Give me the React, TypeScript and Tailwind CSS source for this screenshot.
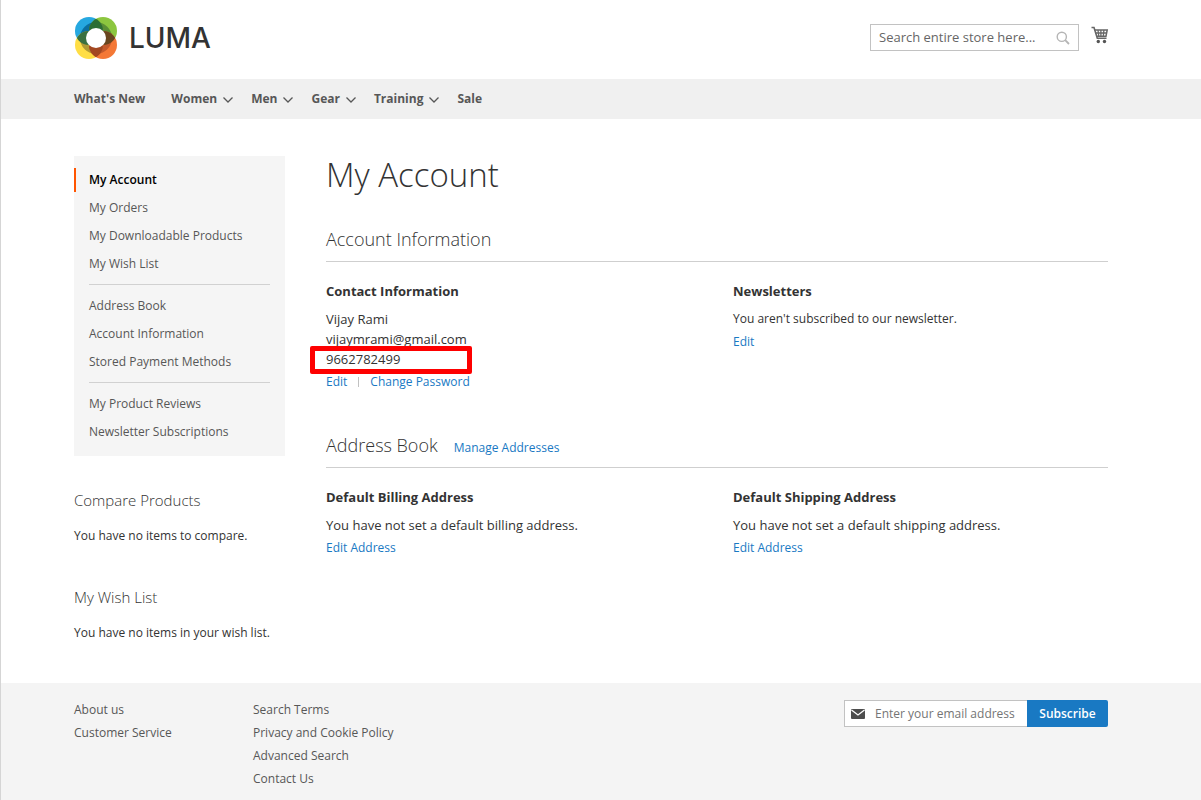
import React from 'react';

const navItems = [
  { label: "What's New", menu: false },
  { label: 'Women', menu: true },
  { label: 'Men', menu: true },
  { label: 'Gear', menu: true },
  { label: 'Training', menu: true },
  { label: 'Sale', menu: false },
];

const accountLinks = [
  ['My Account', 'My Orders', 'My Downloadable Products', 'My Wish List'],
  ['Address Book', 'Account Information', 'Stored Payment Methods'],
  ['My Product Reviews', 'Newsletter Subscriptions'],
];

const footerLinks = [
  ['About us', 'Customer Service'],
  ['Search Terms', 'Privacy and Cookie Policy', 'Advanced Search', 'Contact Us'],
];

function Logo() {
  return (
    <a href="#" className="flex items-center gap-3" aria-label="Luma home">
      <svg width="43" height="42" viewBox="-1 0 43 42" aria-hidden="true">
        <defs>
          <clipPath id="tl"><circle cx="14" cy="14" r="14" /></clipPath>
          <clipPath id="tr"><circle cx="28" cy="14" r="14" /></clipPath>
          <clipPath id="bl"><circle cx="14" cy="28" r="14" /></clipPath>
          <clipPath id="br"><circle cx="28" cy="28" r="14" /></clipPath>
        </defs>
        <circle cx="14" cy="14" r="14" fill="#26a8e0" />
        <circle cx="28" cy="14" r="14" fill="#8cc63f" />
        <circle cx="14" cy="28" r="14" fill="#ffde45" />
        <circle cx="28" cy="28" r="14" fill="#f47836" />
        <circle cx="21" cy="21" r="16" fill="#0b6f9f" clipPath="url(#tl)" />
        <circle cx="21" cy="21" r="16" fill="#5a8f35" clipPath="url(#tr)" />
        <circle cx="21" cy="21" r="16" fill="#b09a35" clipPath="url(#bl)" />
        <circle cx="21" cy="21" r="16" fill="#c45a2c" clipPath="url(#br)" />
        <g clipPath="url(#tl)">
          <circle cx="28" cy="14" r="14" fill="#2c6e35" />
          <circle cx="14" cy="28" r="14" fill="#3a7040" />
        </g>
        <g clipPath="url(#br)">
          <circle cx="28" cy="14" r="14" fill="#69461f" />
          <circle cx="14" cy="28" r="14" fill="#a34822" />
        </g>
        <circle cx="21" cy="21" r="10" fill="#fff" />
      </svg>
      <span className="font-['Inter',sans-serif] text-[28px] leading-8 font-medium text-[#333]">LUMA</span>
    </a>
  );
}

function CartIcon() {
  return (
    <svg width="18" height="18" viewBox="0 0 18 18" fill="none" stroke="#666" aria-hidden="true">
      <path d="M0.5 1.5H3L6.3 12.3H15.5" strokeWidth="1.6" />
      <path d="M3.6 4H16.2L15 10.2H5.6" strokeWidth="1.5" />
      <path d="M4 7H15.5M7 4L7.8 10.5M9.9 4V10.5M12.9 4L12.3 10.5" strokeWidth="1.3" />
      <circle cx="7.3" cy="15.5" r="1.7" fill="#555" stroke="none" />
      <circle cx="13.5" cy="15.5" r="1.7" fill="#555" stroke="none" />
    </svg>
  );
}

function SearchIcon() {
  return (
    <svg width="14" height="14" viewBox="0 0 14 14" fill="none" stroke="#b5b5b5" aria-hidden="true">
      <circle cx="5.8" cy="5.8" r="4.6" strokeWidth="1.4" />
      <path d="M9.2 9.2L13 13" strokeWidth="1.8" />
    </svg>
  );
}

function ChevronIcon() {
  return (
    <svg width="16" height="16" viewBox="0 0 16 16" fill="none" stroke="#575757" strokeWidth="1.3" aria-hidden="true">
      <path d="M2.5 6.5L7 11L11.5 6.5" />
    </svg>
  );
}

function MailIcon() {
  return (
    <svg width="14" height="10" viewBox="0 0 14 10" aria-hidden="true">
      <rect width="14" height="10" rx="1" fill="#4d4d4d" />
      <path d="M0.5 1L7 6L13.5 1" fill="none" stroke="#fff" strokeWidth="1.3" />
    </svg>
  );
}

function TextLink({ children }: { children: React.ReactNode }) {
  return <a href="#" className="text-xs leading-5 text-[#1979c3] hover:underline">{children}</a>;
}

function SectionTitle({ title, children }: { title: string; children?: React.ReactNode }) {
  return (
    <div className="flex items-baseline gap-4 border-b border-[#cfcfcf] pb-2">
      <h2 className="text-lg leading-7 font-light">{title}</h2>
      {children}
    </div>
  );
}

function Box({ title, children }: { title: string; children: React.ReactNode }) {
  return (
    <div className="flex flex-col items-start">
      <h3 className="mb-2 text-[13px] leading-5 font-bold">{title}</h3>
      {children}
    </div>
  );
}

function SideBlock({ title, text }: { title: string; text: string }) {
  return (
    <section>
      <h2 className="text-[15px] leading-6 font-light">{title}</h2>
      <p className="mt-3 text-xs leading-6">{text}</p>
    </section>
  );
}

export default function App() {
  return (
    <div className="flex min-h-screen flex-col border-l border-[#d5d5d5] bg-white font-['Open_Sans','Noto_Sans',sans-serif] text-sm text-[#333]">
      <header className="flex items-start justify-between pt-[17px] pr-[92px] pb-5 pl-[73px]">
        <Logo />
        <div className="flex items-start gap-3 pt-[7px]">
          <form className="flex h-[27px] w-[209px] items-center border border-[#c2c2c2] bg-white px-2">
            <input type="search" aria-label="Search" placeholder="Search entire store here..." className="min-w-0 flex-1 text-[13px] outline-none placeholder:text-[#666]" />
            <button type="button" aria-label="Submit search"><SearchIcon /></button>
          </form>
          <a href="#" aria-label="Cart" className="pt-[2px]"><CartIcon /></a>
        </div>
      </header>

      <nav className="flex h-10 items-center gap-[26px] bg-[#f0f0f0] pl-[73px] text-xs font-bold text-[#575757]">
        {navItems.map((item) => (
          <a key={item.label} href="#" className={item.menu ? '-mr-3 flex items-center gap-1' : 'flex items-center'}>
            {item.label}
            {item.menu && <ChevronIcon />}
          </a>
        ))}
      </nav>

      <div className="flex items-start gap-[41px] pt-[37px] pr-[93px] pb-[37px] pl-[73px]">
        <aside className="w-[211px] shrink-0">
          <nav aria-label="Account" className="bg-[#f5f5f5] py-[10px] text-xs text-[#575757]">
            {accountLinks.map((group, index) => (
              <React.Fragment key={group[0]}>
                {index > 0 && <hr className="mx-[15px] mt-[6px] mb-[7px] border-[#d1d1d1]" />}
                <ul>
                  {group.map((label) => (
                    <li key={label} className="flex h-7 items-center">
                      <a
                        href="#"
                        className={
                          label === 'My Account'
                            ? 'border-l-2 border-[#ff5501] pl-[13px] leading-6 font-semibold text-black'
                            : 'pl-[15px] leading-6'
                        }
                      >
                        {label}
                      </a>
                    </li>
                  ))}
                </ul>
              </React.Fragment>
            ))}
          </nav>
          <div className="mt-8 flex flex-col gap-[37px]">
            <SideBlock title="Compare Products" text="You have no items to compare." />
            <SideBlock title="My Wish List" text="You have no items in your wish list." />
          </div>
        </aside>

        <main className="min-w-0 flex-1">
          <h1 className="text-[33px] leading-[38px] font-light">My Account</h1>

          <section className="mt-[31px]">
            <SectionTitle title="Account Information" />
            <div className="mt-[19px] grid grid-cols-2 gap-x-8">
              <Box title="Contact Information">
                <address className="text-[13px] leading-5 not-italic">
                  Vijay Rami<br />
                  vijaymrami@gmail.com<br />
                  <span className="relative">
                    9662782499
                    <span className="absolute -top-1 -left-4 h-7 w-[162px] rounded-xs border-5 border-[#fe0000]" />
                  </span>
                </address>
                <div className="mt-[3px] flex items-center gap-[11px]">
                  <TextLink>Edit</TextLink>
                  <span className="h-[10px] w-px bg-[#c1c1c1]" />
                  <TextLink>Change Password</TextLink>
                </div>
              </Box>
              <Box title="Newsletters">
                <p className="mb-[3px] text-xs leading-5">You aren't subscribed to our newsletter.</p>
                <TextLink>Edit</TextLink>
              </Box>
            </div>
          </section>

          <section className="mt-[39px]">
            <SectionTitle title="Address Book"><TextLink>Manage Addresses</TextLink></SectionTitle>
            <div className="mt-[19px] grid grid-cols-2 gap-x-8">
              <Box title="Default Billing Address">
                <p className="mb-[3px] text-[13px] leading-5">You have not set a default billing address.</p>
                <TextLink>Edit Address</TextLink>
              </Box>
              <Box title="Default Shipping Address">
                <p className="mb-[3px] text-[13px] leading-5">You have not set a default shipping address.</p>
                <TextLink>Edit Address</TextLink>
              </Box>
            </div>
          </section>
        </main>
      </div>

      <footer className="mt-px flex flex-1 items-start bg-[#f4f4f4] pt-[15px] pr-[93px] pl-[73px] text-xs text-[#575757]">
        {footerLinks.map((group) => (
          <ul key={group[0]} className="w-[179px]">
            {group.map((label) => (
              <li key={label} className="leading-[23px]"><a href="#">{label}</a></li>
            ))}
          </ul>
        ))}
        <form className="mt-[2px] ml-auto flex h-[27px]">
          <label className="flex w-[183px] items-center gap-[10px] border border-r-0 border-[#c2c2c2] bg-white pl-[6px]">
            <MailIcon />
            <input type="email" aria-label="Email address" placeholder="Enter your email address" className="min-w-0 flex-1 outline-none placeholder:text-[#757575]" />
          </label>
          <button type="button" className="w-[81px] rounded-r-[2px] bg-[#1979c3] font-semibold text-white">Subscribe</button>
        </form>
      </footer>
    </div>
  );
}
